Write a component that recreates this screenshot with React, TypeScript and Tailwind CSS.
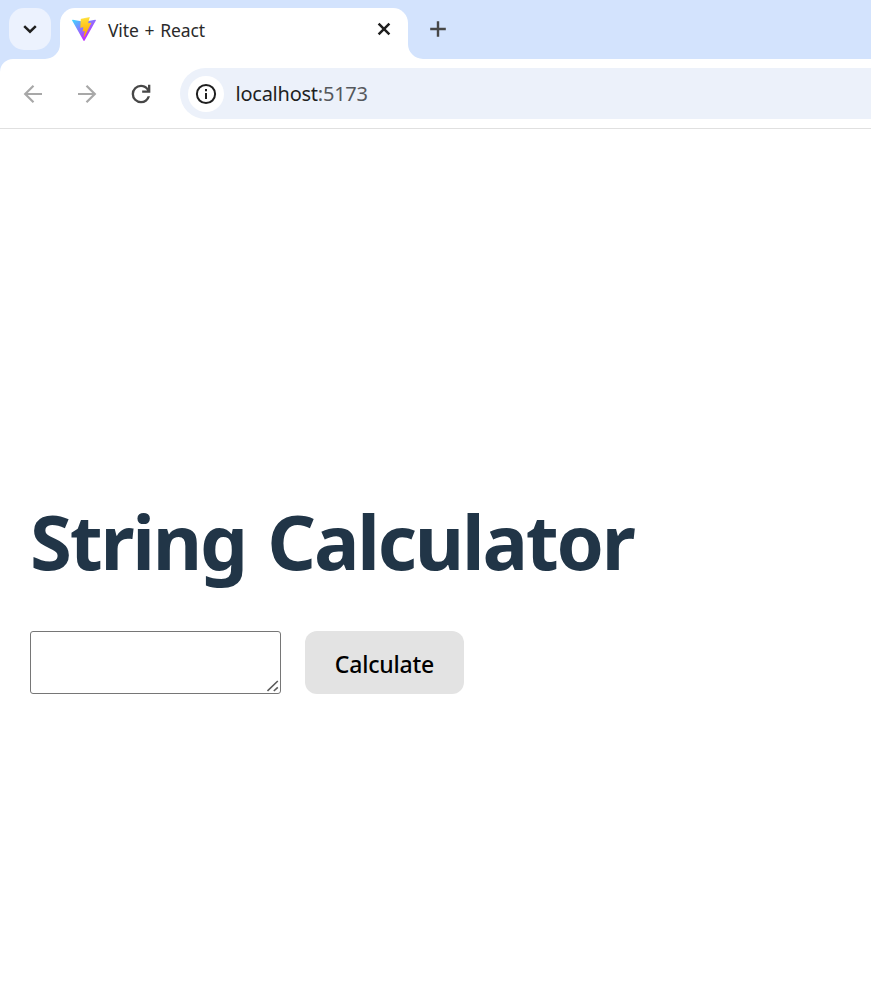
import React from "react";

function ViteLogo() {
  return (
    <svg className="-mt-[2px] h-6 w-6 shrink-0" viewBox="0 0 256 257" fill="none">
      <defs>
        <linearGradient id="shield" x1="-.828%" x2="57.636%" y1="7.652%" y2="78.411%">
          <stop offset="0%" stopColor="#41D1FF" />
          <stop offset="100%" stopColor="#BD34FE" />
        </linearGradient>
        <linearGradient id="bolt" x1="43.376%" x2="50.316%" y1="2.242%" y2="89.03%">
          <stop offset="0%" stopColor="#FFEA83" />
          <stop offset="8.333%" stopColor="#FFDD35" />
          <stop offset="100%" stopColor="#FFA800" />
        </linearGradient>
      </defs>
      <path fill="url(#shield)" d="M255.153 37.938L134.897 252.976c-2.483 4.44-8.862 4.466-11.382.048L.875 37.958c-2.746-4.814 1.371-10.646 6.827-9.67l120.385 21.517a6.537 6.537 0 0 0 2.322-.004l117.867-21.483c5.438-.991 9.574 4.796 6.877 9.62Z" />
      <path fill="url(#bolt)" d="M185.432.063L96.44 17.501a3.268 3.268 0 0 0-2.634 3.014l-5.474 92.456a3.268 3.268 0 0 0 3.997 3.378l24.777-5.718c2.318-.535 4.413 1.507 3.936 3.838l-7.361 36.047c-.495 2.426 1.782 4.5 4.151 3.78l15.304-4.649c2.372-.72 4.652 1.36 4.15 3.788l-11.698 56.621c-.732 3.542 3.979 5.473 5.943 2.437l1.313-2.028l72.516-144.72c1.215-2.423-.88-5.186-3.54-4.672l-25.505 4.922c-2.396.462-4.435-1.77-3.759-4.114l16.646-57.705c.677-2.35-1.37-4.583-3.769-4.113Z" />
    </svg>
  );
}

function TabStrip() {
  return (
    <div className="flex h-[59px] shrink-0 items-start bg-[#d3e3fd] pt-2 pl-[9px]">
      <button className="flex h-[42px] w-[42px] shrink-0 items-center justify-center rounded-[15px] bg-[#ecf2fe]">
        <svg className="h-6 w-6" viewBox="0 0 24 24" fill="none" stroke="#1f1f1f" strokeWidth="2.5">
          <path d="M6.2 9.2L12 14.7L17.8 9.2" />
        </svg>
      </button>
      <div className="relative ml-[9px] flex h-[51px] w-[348px] shrink-0 items-center rounded-t-[15px] bg-white pb-[7px] pl-3">
        <svg className="absolute bottom-0 -left-[15px] h-[15px] w-[15px]" viewBox="0 0 15 15">
          <path fill="#fff" d="M15 0V15H0A15 15 0 0 0 15 0Z" />
        </svg>
        <ViteLogo />
        <span className="ml-3 text-[17.5px] leading-6 tracking-[-0.15px] whitespace-nowrap text-[#2a2a2a] [word-spacing:1.5px]">Vite + React</span>
        <svg className="-mt-[3px] mr-3 ml-auto h-6 w-6" viewBox="0 0 24 24" fill="none" stroke="#1f1f1f" strokeWidth="2.5">
          <path d="M6.6 6.6L17.4 17.4M17.4 6.6L6.6 17.4" />
        </svg>
        <svg className="absolute -right-[15px] bottom-0 h-[15px] w-[15px]" viewBox="0 0 15 15">
          <path fill="#fff" d="M0 0V15H15A15 15 0 0 1 0 0Z" />
        </svg>
      </div>
      <svg className="mt-[9px] ml-[18px] h-6 w-6" viewBox="0 0 24 24" fill="none" stroke="#474747" strokeWidth="2.4">
        <path d="M12 4.2V19.8M4.2 12H19.8" />
      </svg>
    </div>
  );
}

function Toolbar() {
  return (
    <div className="shrink-0 bg-[#d3e3fd]">
      <div className="flex h-[70px] items-center rounded-tl-[13px] border-b border-[#e0e0e0] bg-white pl-[21px]">
        <svg className="h-6 w-6 shrink-0" viewBox="0 0 24 24" fill="none" stroke="#a8a8a8" strokeWidth="2.2">
          <path d="M21 12H4.5M12.5 3.7L4.2 12L12.5 20.3" />
        </svg>
        <svg className="ml-[30px] h-6 w-6 shrink-0" viewBox="0 0 24 24" fill="none" stroke="#a8a8a8" strokeWidth="2.2">
          <path d="M3 12H19.5M11.5 3.7L19.8 12L11.5 20.3" />
        </svg>
        <svg className="ml-[28px] h-7 w-7 shrink-0" viewBox="0 0 24 24" fill="#474747">
          <path d="M12 20q-3.35 0-5.675-2.325T4 12t2.325-5.675T12 4q1.725 0 3.3.713T18 6.75V4h2v7h-7V9h4.2q-.8-1.4-2.187-2.2T12 6Q9.5 6 7.75 7.75T6 12t1.75 4.25T12 18q1.925 0 3.475-1.1T17.65 14h2.1q-.7 2.65-2.85 4.325T12 20" />
        </svg>
        <div className="ml-[25px] flex h-[51px] flex-1 items-center rounded-l-full bg-[#ecf1fa] pl-[8px]">
          <div className="flex h-9 w-9 items-center justify-center rounded-full bg-white">
            <svg className="h-6 w-6" viewBox="0 0 24 24" fill="none" stroke="#1f1f1f" strokeWidth="2">
              <circle cx="12" cy="12" r="9.1" />
              <path d="M12 11V17M12 7V9.2" />
            </svg>
          </div>
          <span className="ml-[11.5px] text-[20px] leading-7 tracking-[-0.24px] whitespace-nowrap text-[#1f1f1f]">
            localhost<span className="text-[#55585c]">:5173</span>
          </span>
        </div>
      </div>
    </div>
  );
}

function Calculator() {
  return (
    <main className="flex flex-1 flex-col items-start bg-white pt-[370px] pl-[30px]">
      <h1 className="text-[76px] leading-[84px] font-bold tracking-[-2.2px] whitespace-nowrap text-[#213547] [word-spacing:4px]">String Calculator</h1>
      <div className="mt-[48px] flex items-start gap-6">
        <div className="relative h-[63px] w-[251px]">
          <textarea aria-label="Numbers" className="block h-full w-full resize-none rounded-[3px] border border-[#767676] bg-white p-1 outline-none" />
          <svg className="pointer-events-none absolute right-[2px] bottom-[2px] h-3 w-3" viewBox="0 0 12 12" fill="none" stroke="#5a5a5a" strokeWidth="1.6">
            <path d="M.5 11L10.8 1M6.8 11L10.8 7.3" />
          </svg>
        </div>
        <button className="flex h-[63px] w-[159px] items-center justify-center rounded-xl bg-[#e3e3e3] pt-1 text-[23px] font-medium tracking-[-0.2px] text-black">
          Calculate
        </button>
      </div>
    </main>
  );
}

export default function App() {
  return (
    <div className="flex h-[1003px] w-full flex-col overflow-hidden bg-white font-['Noto_Sans','Open_Sans',sans-serif]">
      <TabStrip />
      <Toolbar />
      <Calculator />
    </div>
  );
}
